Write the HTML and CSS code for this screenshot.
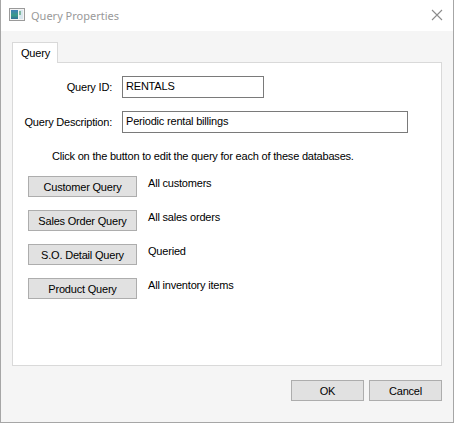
FILE: index.html
```html
<!DOCTYPE html>
<html>
<head>
<meta charset="utf-8">
<link rel="stylesheet" href="styles.css">
</head>
<body>
<div class="window">
  <div class="titlebar">
    <svg class="app-icon" width="16" height="13" viewBox="0 0 16 13">
      <rect x="0.5" y="0.5" width="15" height="12" fill="#f4f4f4" stroke="#9a9a9a"/>
      <defs>
        <linearGradient id="g" x1="0" y1="0" x2="0" y2="1">
          <stop offset="0" stop-color="#3f7fb8"/>
          <stop offset="0.6" stop-color="#3a9a8a"/>
          <stop offset="1" stop-color="#2f6f9a"/>
        </linearGradient>
      </defs>
      <rect x="2" y="2" width="7" height="9" fill="url(#g)"/>
      <rect x="10" y="2" width="4" height="9" fill="#d8e6ee"/>
      <rect x="10" y="3" width="2" height="4" fill="#7fb9a0"/>
    </svg>
    <span class="title">Query Properties</span>
    <svg class="close" width="12" height="12" viewBox="0 0 12 12">
      <path d="M1 1 L11 11 M11 1 L1 11" stroke="#8c8c8c" stroke-width="1.1" fill="none"/>
    </svg>
  </div>
  <div class="client">
    <div class="tabs"><div class="tab">Query</div></div>
    <div class="panel">
      <div class="field">
        <label class="lbl">Query ID:</label>
        <div class="input short">RENTALS</div>
      </div>
      <div class="field">
        <label class="lbl">Query Description:</label>
        <div class="input long">Periodic rental billings</div>
      </div>
      <p class="hint">Click on the button to edit the query for each of these databases.</p>
      <div class="qlist">
        <div class="qrow"><button class="btn qbtn">Customer Query</button><span class="qdesc">All customers</span></div>
        <div class="qrow"><button class="btn qbtn">Sales Order Query</button><span class="qdesc">All sales orders</span></div>
        <div class="qrow"><button class="btn qbtn">S.O. Detail Query</button><span class="qdesc">Queried</span></div>
        <div class="qrow"><button class="btn qbtn">Product Query</button><span class="qdesc">All inventory items</span></div>
      </div>
    </div>
    <div class="footer">
      <button class="btn dbtn">OK</button>
      <button class="btn dbtn">Cancel</button>
    </div>
  </div>
</div>
</body>
</html>
```

FILE: styles.css
```css
html, body {
  margin: 0;
  padding: 0;
  background: #f5f5f5;
}
.window {
  width: 454px;
  height: 423px;
  box-sizing: border-box;
  border-left: 1px solid #a6a6a6;
  border-right: 1px solid #a6a6a6;
  border-bottom: 1px solid #a6a6a6;
  background: #f5f5f5;
  display: flex;
  flex-direction: column;
  font-family: "Liberation Sans", Arial, sans-serif;
  font-size: 11px;
  letter-spacing: -0.2px;
  color: #000;
}
.titlebar {
  height: 31px;
  background: #fff;
  display: flex;
  align-items: center;
  padding-left: 8px;
  padding-right: 10px;
  flex-shrink: 0;
}
.app-icon {
  display: block;
  margin-top: -2px;
}
.title {
  margin-left: 6px;
  font-family: "Segoe UI", "Noto Sans", sans-serif;
  font-size: 11px;
  letter-spacing: 0;
  color: #999;
  flex: 1;
  margin-top: -1px;
}
.close {
  display: block;
  margin-top: -1px;
}
.client {
  padding: 11px 11px 0 11px;
  flex: 1;
  display: flex;
  flex-direction: column;
}
.tabs {
  display: flex;
  height: 20px;
}
.tab {
  width: 46px;
  height: 21px;
  box-sizing: border-box;
  border: 1px solid #d9d9d9;
  border-bottom: none;
  background: #fff;
  padding-left: 8px;
  line-height: 20px;
  position: relative;
  z-index: 1;
}
.panel {
  height: 304px;
  box-sizing: border-box;
  border: 1px solid #d9d9d9;
  background: #fff;
  padding-top: 13px;
}
.field {
  display: flex;
  align-items: center;
  margin-bottom: 13px;
}
.lbl {
  width: 99px;
  text-align: right;
  margin-right: 10px;
  white-space: nowrap;
}
.input {
  height: 22px;
  box-sizing: border-box;
  border: 1px solid #7a7a7a;
  padding: 0 3px;
  line-height: 18px;
  background: #fff;
}
.short { width: 142px; }
.long { width: 286px; }
.hint {
  margin: 17px 0 0 39px;
  line-height: 13px;
}
.qlist {
  margin: 13px 0 0 15px;
  display: flex;
  flex-direction: column;
  gap: 13px;
}
.qrow {
  display: flex;
  align-items: flex-start;
}
.btn {
  font-family: "Liberation Sans", Arial, sans-serif;
  font-size: 11px;
  letter-spacing: -0.2px;
  color: #000;
  background: #e1e1e1;
  border: 1px solid #adadad;
  border-radius: 0;
  padding: 0;
  margin: 0;
  height: 21px;
  box-sizing: border-box;
}
.qbtn {
  width: 109px;
}
.qdesc {
  margin-left: 11px;
  line-height: 13px;
  margin-top: 1px;
}
.footer {
  display: flex;
  justify-content: flex-end;
  gap: 5px;
  margin-top: 14px;
}
.dbtn {
  width: 73px;
}
```
